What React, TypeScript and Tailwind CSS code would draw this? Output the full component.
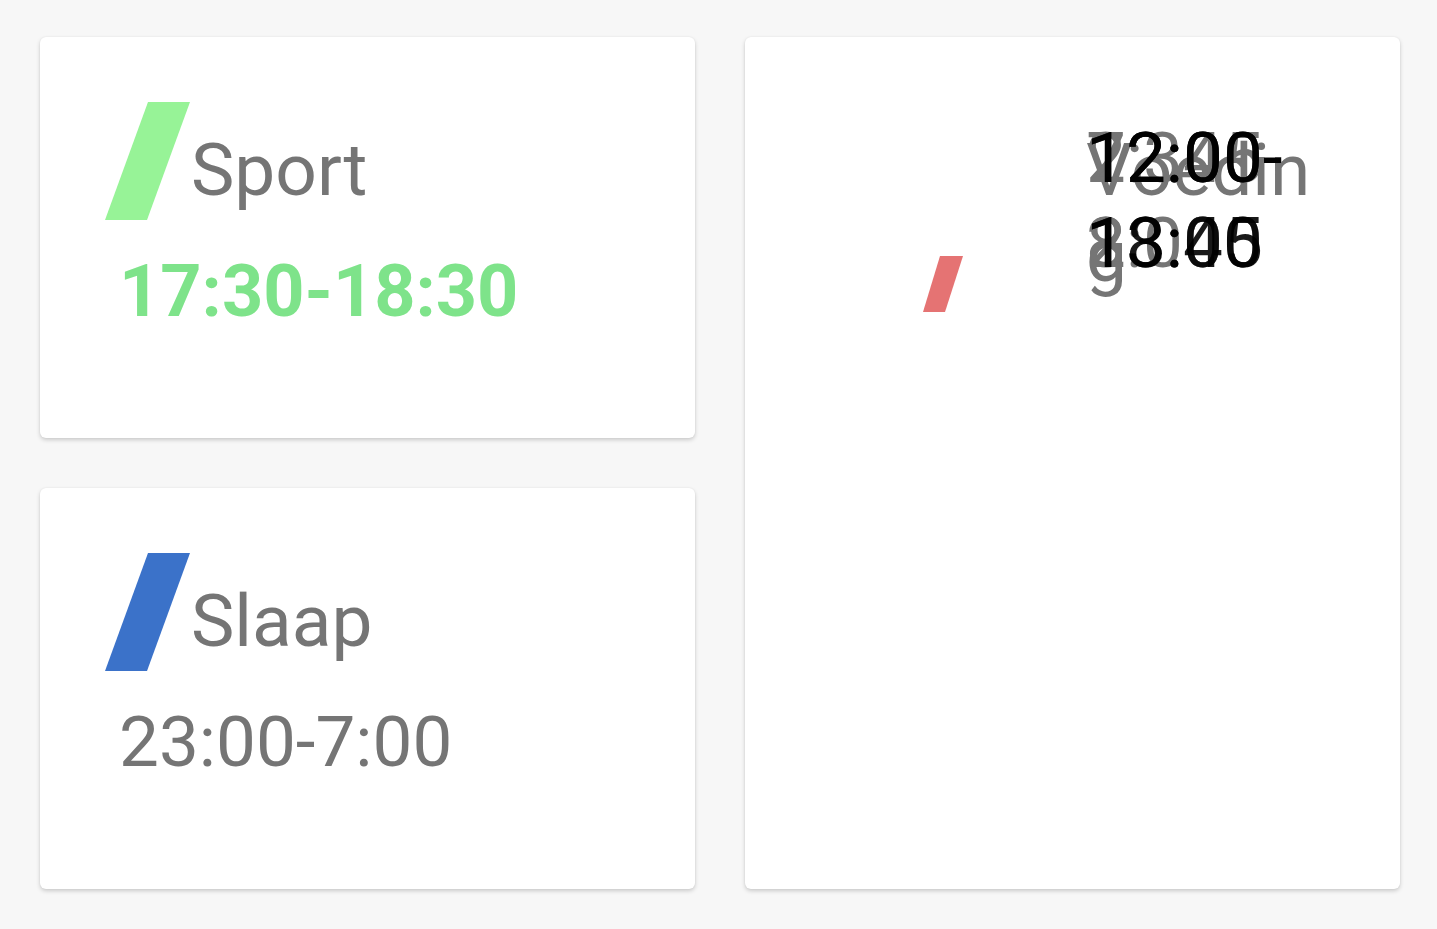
import React from 'react';

interface ActivityCardProps {
  title: string;
  time: string;
  stripe: string;
  timeClass: string;
}

const cardClass =
  'rounded-md bg-white shadow-[0_2px_4px_rgba(0,0,0,0.18),0_0_2px_rgba(0,0,0,0.06)]';

const Stripe: React.FC<{ color: string }> = ({ color }) => (
  <svg width="85" height="118" viewBox="0 0 85 118" className="shrink-0">
    <polygon points="43,0 85,0 42,118 0,118" fill={color} />
  </svg>
);

const ActivityCard: React.FC<ActivityCardProps> = ({ title, time, stripe, timeClass }) => {
  return (
    <div className={`h-[401px] pl-[65px] pt-[65px] ${cardClass}`}>
      <div className="flex items-start">
        <Stripe color={stripe} />
        <span className="ml-px mt-[25px] text-[73px] leading-[normal] text-[#757575]">{title}</span>
      </div>
      <div className={`ml-[14px] mt-[29px] leading-[normal] ${timeClass}`}>{time}</div>
    </div>
  );
};

// the Voeding card renders all its rows in the same spot, so they pile up
const stacked = [
  { text: '7:30-8:00', color: 'text-[#757575]' },
  { text: '22:45-23:00', color: 'text-[#757575]' },
  { text: '12:00-13:00', color: 'text-black/90' },
  { text: '12:00-18:45', color: 'text-black/90' },
];

const App: React.FC = () => {
  return (
    <div className="min-h-[929px] bg-[#f7f7f7] pl-[40px] pt-[37px] font-['Roboto',sans-serif]">
      <div className="grid grid-cols-[655px_655px] grid-rows-[401px_401px] gap-[50px]">
        <ActivityCard
          title="Sport"
          time="17:30-18:30"
          stripe="#97f397"
          timeClass="text-[72px] font-bold text-[#7ee38a]"
        />
        <div className={`row-span-2 grid content-start items-start justify-items-start ${cardClass}`}>
          <svg
            width="40"
            height="56"
            viewBox="0 0 40 56"
            className="col-start-1 row-start-1 ml-[178px] mt-[219px]"
          >
            <polygon points="17,0 40,0 22,56 0,56" fill="#e57373" />
          </svg>
          <div className="col-start-1 row-start-1 ml-[341px] mt-[90px] w-[232px] break-all text-[73px] leading-[normal] text-[#757575]">
            Voeding
          </div>
          {stacked.map((row) => (
            <div
              key={row.text}
              className={`col-start-1 row-start-1 ml-[341px] mt-[78px] w-[232px] text-[71px] leading-[85px] ${row.color}`}
            >
              {row.text}
            </div>
          ))}
        </div>
        <ActivityCard
          title="Slaap"
          time="23:00-7:00"
          stripe="#3b72c9"
          timeClass="text-[71px] text-[#757575]"
        />
      </div>
    </div>
  );
};

export default App;
